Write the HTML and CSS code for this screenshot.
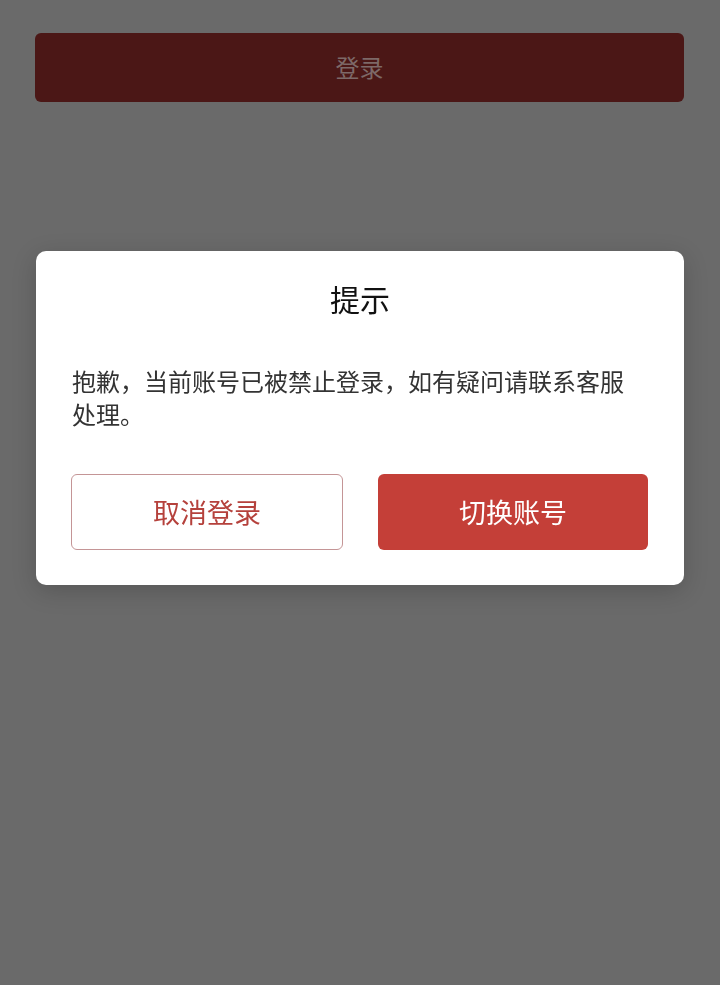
FILE: index.html
```html
<!DOCTYPE html>
<html lang="zh-CN">
<head>
<meta charset="utf-8">
<title>提示</title>
<link rel="stylesheet" href="styles.css">
</head>
<body>
<div class="page">
  <button class="login-btn">登录</button>
</div>
<div class="overlay">
  <div class="dialog">
    <div class="dialog-title">提示</div>
    <div class="dialog-body">抱歉，当前账号已被禁止登录，如有疑问请联系客服处理。</div>
    <div class="dialog-actions">
      <button class="btn btn-cancel">取消登录</button>
      <button class="btn btn-confirm">切换账号</button>
    </div>
  </div>
</div>
</body>
</html>
```
FILE: styles.css
```css
html, body {
  margin: 0;
  padding: 0;
  height: 100%;
}
body {
  background: #6a6a6a;
  font-family: "Noto Sans CJK SC", "Noto Sans", sans-serif;
}
.page {
  padding: 33px 36px 0 35px;
}
.login-btn {
  display: block;
  width: 100%;
  height: 69px;
  border: none;
  border-radius: 6px;
  background: #4b1716;
  color: #7d6968;
  font-family: inherit;
  font-size: 24px;
  padding: 0 0 3px 0;
}
.overlay {
  position: fixed;
  inset: 0;
  display: flex;
  justify-content: center;
  align-items: flex-start;
  padding-top: 251px;
  box-sizing: border-box;
}
.dialog {
  width: 648px;
  background: #fff;
  border-radius: 10px;
  box-shadow: 0 6px 24px rgba(0, 0, 0, 0.18);
  padding: 27px 36px 35px 36px;
  box-sizing: border-box;
}
.dialog-title {
  text-align: center;
  font-size: 30px;
  line-height: 40px;
  color: #111;
}
.dialog-body {
  margin-top: 46px;
  padding-right: 16px;
  font-size: 24px;
  line-height: 33px;
  color: #333;
}
.dialog-actions {
  margin-top: 44px;
  display: flex;
  gap: 35px;
  margin-left: -1px;
}
.btn {
  flex: 1;
  height: 76px;
  border-radius: 6px;
  font-family: inherit;
  font-size: 27px;
  padding: 0 0 2px 0;
  box-sizing: border-box;
}
.btn-cancel {
  background: #fff;
  border: 1px solid #c49596;
  color: #b5413c;
}
.btn-confirm {
  background: #c43f38;
  border: none;
  color: #fff;
}
```
